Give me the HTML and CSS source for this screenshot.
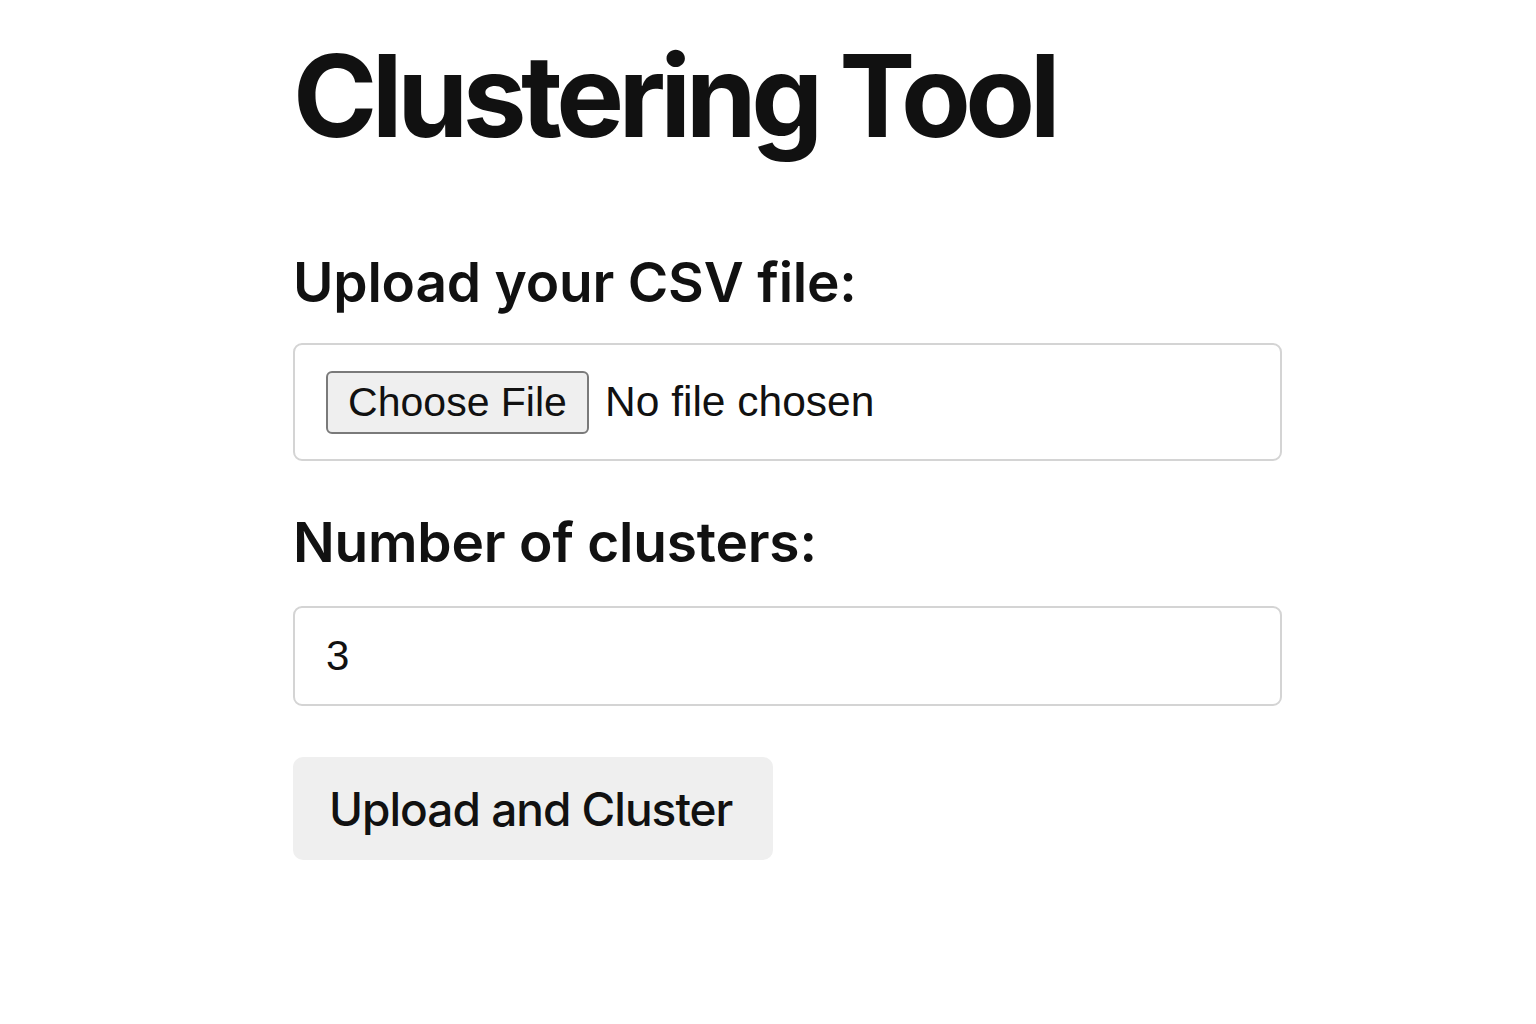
FILE: index.html
```html
<!DOCTYPE html>
<html lang="en">
<head>
<meta charset="utf-8">
<title>Clustering Tool</title>
<link rel="stylesheet" href="styles.css">
</head>
<body>
<main class="page">
  <h1 class="title">Clustering Tool</h1>
  <form class="form">
    <label class="label label-file" for="csv">Upload your CSV file:</label>
    <div class="file-box">
      <input class="file-input" id="csv" type="file" accept=".csv">
    </div>
    <label class="label label-num" for="k">Number of clusters:</label>
    <input class="num-input" id="k" type="number" value="3" min="1">
    <button class="submit" type="button">Upload and Cluster</button>
  </form>
</main>
</body>
</html>
```

FILE: styles.css
```css
html, body {
  margin: 0;
  padding: 0;
  background: #ffffff;
}

body {
  font-family: "Inter", "Liberation Sans", sans-serif;
  color: #111111;
}

.page {
  width: 989px;
  margin-left: 293px;
  padding-top: 39px;
}

.title {
  margin: 0;
  font-size: 114px;
  line-height: 1;
  font-weight: 700;
  letter-spacing: -5.5px;
}

.form {
  display: flex;
  flex-direction: column;
  align-items: flex-start;
}

.label {
  display: block;
  font-size: 55px;
  line-height: 1;
  font-weight: 600;
  letter-spacing: -0.2px;
}

.label-file {
  margin-top: 102px;
}

.file-box {
  box-sizing: border-box;
  align-self: stretch;
  margin-top: 33px;
  height: 118px;
  border: 2px solid #d4d4d4;
  border-radius: 9px;
  padding: 0 31px;
  display: flex;
  align-items: center;
}

.file-input {
  font-family: "Liberation Sans", "Inter", sans-serif;
  font-size: 42.5px;
  color: #111111;
}

.file-input::file-selector-button {
  font-family: "Liberation Sans", "Inter", sans-serif;
  font-size: 41px;
  color: #111111;
  box-sizing: border-box;
  height: 63px;
  width: 263px;
  margin-right: 16px;
  padding: 0;
  background: #efefef;
  border: 2px solid #7a7a7a;
  border-radius: 6px;
}

.label-num {
  margin-top: 54px;
}

.num-input {
  box-sizing: border-box;
  align-self: stretch;
  margin-top: 36px;
  height: 100px;
  border: 2px solid #d4d4d4;
  border-radius: 9px;
  padding: 0 31px;
  font-family: "Liberation Sans", "Inter", sans-serif;
  font-size: 42px;
  color: #111111;
  background: #ffffff;
  outline: none;
  -moz-appearance: textfield;
}

.num-input::-webkit-outer-spin-button,
.num-input::-webkit-inner-spin-button {
  -webkit-appearance: none;
  margin: 0;
}

.submit {
  margin-top: 51px;
  box-sizing: border-box;
  width: 480px;
  height: 103px;
  padding: 0 0 0 36px;
  text-align: left;
  background: #efefef;
  border: none;
  border-radius: 10px;
  font-family: "Inter", "Liberation Sans", sans-serif;
  font-size: 46px;
  font-weight: 500;
  letter-spacing: -1px;
  color: #111111;
}
```
